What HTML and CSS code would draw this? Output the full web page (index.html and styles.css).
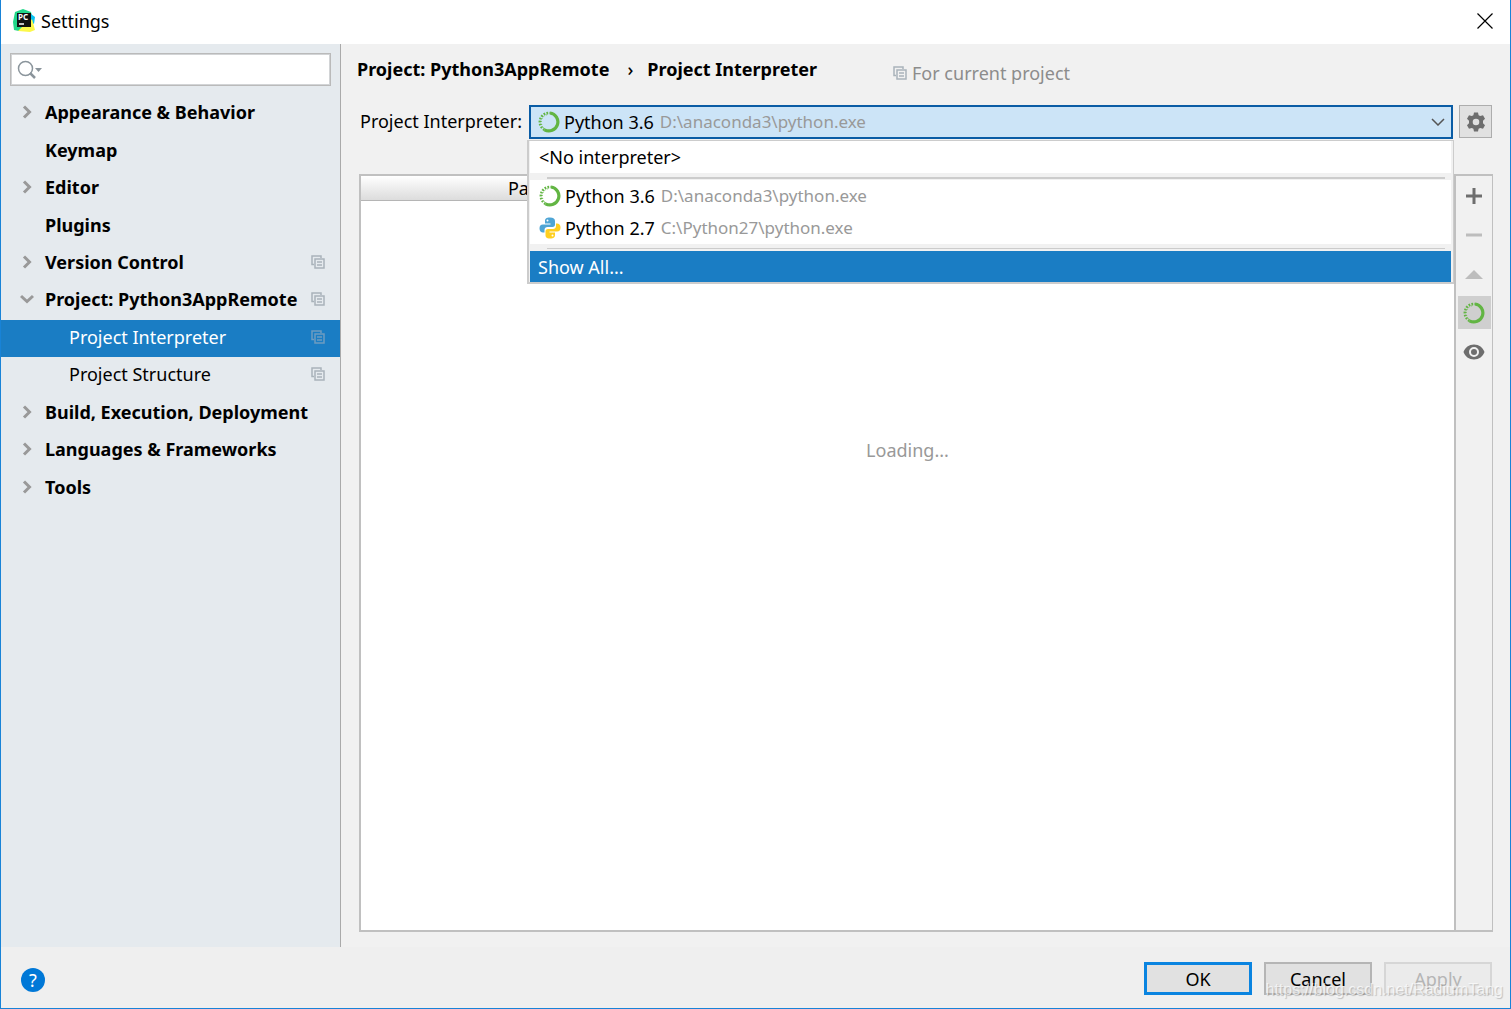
FILE: index.html
```html
<!DOCTYPE html>
<html lang="en">

<head>
    <meta charset="utf-8">
    <title>Settings</title>

    <link rel="stylesheet" href="styles.css">
</head>

<body>

    <!-- Shared icons -->
    <svg class="sprite" aria-hidden="true">
        <symbol id="copy" viewBox="0 0 14 14">
            <path d="M3 9.5H1V1h9v2M4 4h9v9H4zM6 7h5M6 10h5" fill="none" stroke="currentColor" stroke-width="1.500" />
        </symbol>
        <symbol id="right" viewBox="0 0 14 14">
            <path d="M4 1.500 9.500 7 4 12.500" fill="none" stroke="currentColor" stroke-width="3" />
        </symbol>
        <symbol id="down" viewBox="0 0 14 14">
            <path d="M1 4l6 5.500L13 4" fill="none" stroke="currentColor" stroke-width="3" />
        </symbol>
        <symbol id="conda" viewBox="0 0 22 22">
            <path d="M12 2a9 9 0 1 1-5.500 16.800" fill="none" stroke="#62b543" stroke-width="3.200" />
            <path d="M6.500 18.800A9 9 0 0 1 12 2" fill="none" stroke="#62b543" stroke-width="2.600" stroke-dasharray="1.700 1.300" />
            <path d="M5.500 16.500A7.600 7.600 0 0 1 11 3.500" fill="none" stroke="#62b543" stroke-width="1" stroke-dasharray="1 2" />
        </symbol>
        <symbol id="python" viewBox="0 0 22 22">
            <path d="M11 .5C7 .5 6 2 6 4v2.500h5.500v1H4C1.500 7.500.5 9 .5 11.500S2 15.500 4 15.500h1.500V13c0-2 1.300-3 3-3h5c1.700 0 2.500-1 2.500-2.500V4c0-2-1.500-3.500-5-3.500z" fill="#4fa5d5" />
            <path d="M11 21.500c4 0 5-1.500 5-3.500v-2.500h-5.500v-1H18c2.500 0 3.500-1.500 3.500-4S20 6.500 18 6.500h-1V9c0 2-1.300 3-3 3H9c-1.700 0-2.500 1-2.500 2.500V18c0 2 1 3.500 4.500 3.500z" fill="#ffcf1f" />
            <circle cx="8.500" cy="3.500" r="1" fill="#fff" />
            <circle cx="13.500" cy="18.500" r="1" fill="#fff" />
        </symbol>
    </svg>

    <header class="titlebar">
        <svg class="logo" viewBox="0 0 24 24" aria-hidden="true">
            <path d="M3 3 11 0l8 3 1 4-7 13-6 2-5-1-1-8z" fill="#21d789" />
            <path d="m19 5 4 3-1 7-6-4z" fill="#07c3f2" />
            <path d="m20 10 3 11-5 2-12-1 5-5 6-3z" fill="#fcf84a" />
            <path d="M5 4h14v14H5z" fill="#111" />
            <text x="6" y="11" class="logo-text">PC</text>
            <path d="M7 15h5" stroke="#fff" stroke-width="1.500" />
        </svg>
        <h1 class="title">Settings</h1>
        <button class="close" type="button" aria-label="Close">
            <svg viewBox="0 0 16 16"><path d="M.5.5l15 15M15.500.5l-15 15" stroke="#000" stroke-width="1.200" /></svg>
        </button>
    </header>

    <div class="content">
        <aside class="sidebar">
            <label class="search">
                <svg viewBox="0 0 26 20" aria-hidden="true">
                    <circle cx="8.500" cy="8.500" r="7" fill="none" stroke="#8b959c" stroke-width="1.500" />
                    <path d="m13 13 5 5" stroke="#8b959c" stroke-width="2.500" />
                    <path d="M18 8h7l-3.500 4z" fill="#8b959c" />
                </svg>
                <input type="text" aria-label="Search settings">
            </label>

            <nav>
                <ul class="tree">
                    <li><a href="#"><svg class="arrow"><use href="#right" /></svg>Appearance &amp; Behavior</a></li>
                    <li><a href="#"><span class="arrow"></span>Keymap</a></li>
                    <li><a href="#"><svg class="arrow"><use href="#right" /></svg>Editor</a></li>
                    <li><a href="#"><span class="arrow"></span>Plugins</a></li>
                    <li><a href="#"><svg class="arrow"><use href="#right" /></svg>Version Control<svg class="copy"><use href="#copy" /></svg></a></li>
                    <li><a href="#"><svg class="arrow"><use href="#down" /></svg>Project: Python3AppRemote<svg class="copy"><use href="#copy" /></svg></a></li>
                    <li><a href="#" class="child selected" aria-current="page">Project Interpreter<svg class="copy"><use href="#copy" /></svg></a></li>
                    <li><a href="#" class="child">Project Structure<svg class="copy"><use href="#copy" /></svg></a></li>
                    <li><a href="#"><svg class="arrow"><use href="#right" /></svg>Build, Execution, Deployment</a></li>
                    <li><a href="#"><svg class="arrow"><use href="#right" /></svg>Languages &amp; Frameworks</a></li>
                    <li><a href="#"><svg class="arrow"><use href="#right" /></svg>Tools</a></li>
                </ul>
            </nav>
        </aside>

        <main class="main">
            <div class="heading">
                <h2 class="crumbs">Project: Python3AppRemote<span class="crumb-arrow">›</span>Project Interpreter</h2>
                <p class="scope"><svg class="copy"><use href="#copy" /></svg>For current project</p>
            </div>

            <div class="field">
                <label for="interpreter">Project Interpreter:</label>
                <div class="combo">
                    <button class="combo-button" id="interpreter" type="button" aria-haspopup="listbox" aria-expanded="true">
                        <svg class="env"><use href="#conda" /></svg>Python 3.6 <span class="path">D:\anaconda3\python.exe</span>
                        <svg class="chevron" viewBox="0 0 14 8"><path d="m1 1 6 6 6-6" fill="none" stroke="#555" stroke-width="1.500" /></svg>
                    </button>
                    <ul class="popup" role="listbox" aria-label="Project Interpreter">
                        <li class="option" role="option">&lt;No interpreter&gt;</li>
                        <li class="separator thick" role="presentation"></li>
                        <li class="option" role="option"><svg class="env"><use href="#conda" /></svg>Python 3.6 <span class="path">D:\anaconda3\python.exe</span></li>
                        <li class="option" role="option"><svg class="env"><use href="#python" /></svg>Python 2.7 <span class="path">C:\Python27\python.exe</span></li>
                        <li class="separator" role="presentation"></li>
                        <li class="option active" role="option" aria-selected="true">Show All...</li>
                    </ul>
                </div>
                <button class="gear" type="button" aria-label="Interpreter settings">
                    <svg viewBox="0 0 20 20">
                        <path fill="#6e6e6e" fill-rule="evenodd" d="M8 .5h4l.6 2.700 1.600.9 2.800-.9 2 3.500-2 2v2.600l2 2-2 3.500-2.800-.9-1.600.9-.6 2.700H8l-.6-2.700-1.600-.9-2.800.9-2-3.500 2-2V8.700l-2-2 2-3.500 2.800.9 1.600-.9zM10 6.700a3.300 3.300 0 1 0 0 6.600 3.300 3.300 0 0 0 0-6.600z" />
                    </svg>
                </button>
            </div>

            <div class="packages">
                <div class="package-list">
                    <table>
                        <thead>
                            <tr>
                                <th>Package</th>
                                <th></th>
                                <th></th>
                            </tr>
                        </thead>
                    </table>
                    <p class="loading">Loading...</p>
                </div>
                <div class="tools">
                    <button type="button" aria-label="Install"><svg viewBox="0 0 22 22"><path d="M3 11h16M11 3v16" stroke="#6e6e6e" stroke-width="3" /></svg></button>
                    <button type="button" aria-label="Uninstall" disabled><svg viewBox="0 0 22 22"><path d="M3 11h16" stroke="#bdbdbd" stroke-width="3" /></svg></button>
                    <button type="button" aria-label="Upgrade" disabled><svg viewBox="0 0 22 22"><path d="M2 16h18l-9-9z" fill="#bdbdbd" /></svg></button>
                    <button type="button" aria-label="Use Conda" class="pressed"><svg><use href="#conda" /></svg></button>
                    <button type="button" aria-label="Show early releases">
                        <svg viewBox="0 0 22 22">
                            <path fill="#6e6e6e" fill-rule="evenodd" d="M11 3.500C6 3.500 2 6.500.5 11c1.500 4.500 5.500 7.500 10.500 7.500s9-3 10.500-7.500C20 6.500 16 3.500 11 3.500zm0 2.500a5 5 0 1 1 0 10 5 5 0 0 1 0-10z" />
                            <circle cx="11" cy="11" r="3" fill="#6e6e6e" />
                        </svg>
                    </button>
                </div>
            </div>
        </main>
    </div>

    <footer class="footer">
        <button class="help" type="button" aria-label="Help">?</button>
        <button class="btn primary" type="button">OK</button>
        <button class="btn" type="button">Cancel</button>
        <button class="btn" type="button" disabled>Apply</button>
        <span class="watermark">https://blog.csdn.net/RadiumTang</span>
    </footer>

</body>

</html>
```
FILE: styles.css
```css
* {
    box-sizing: border-box;
}

body {
    margin: 0;
    height: 100vh;
    display: flex;
    flex-direction: column;
    border: 1px solid #1883d7;
    border-top: 0;
    background: #f1f1f1;
    color: #000;
    font: 18px/24px "Noto Sans", "Open Sans", sans-serif;
}

h1,
h2,
p,
ul {
    margin: 0;
    padding: 0;
    font-size: inherit;
    list-style: none;
}

button,
input {
    font: inherit;
    color: inherit;
    padding: 0;
    margin: 0;
}

svg {
    display: block;
    flex: none;
}

.sprite {
    position: absolute;
    width: 0;
    height: 0;
}

/* Title bar */
.titlebar {
    display: flex;
    align-items: center;
    height: 44px;
    padding: 0 17px 2px 11px;
    background: #fff;
}

.logo {
    width: 24px;
    height: 24px;
    margin-right: 5px;
}

.logo-text {
    fill: #fff;
    font-size: 8px;
    font-weight: bold;
}

.title {
    flex: 1;
    font-weight: normal;
}

.close {
    border: 0;
    background: none;
}

.close svg {
    width: 16px;
    height: 16px;
}

.content {
    flex: 1;
    display: flex;
    min-height: 0;
}

/* Sidebar */
.sidebar {
    width: 340px;
    flex: none;
    padding-top: 9px;
    background: #e5eaee;
    border-right: 1px solid #aaa;
}

.search {
    display: flex;
    align-items: center;
    height: 33px;
    margin: 0 9px 9px;
    padding-left: 6px;
    background: #fff;
    border: 1px solid #bababa;
    outline: 1px solid #d2d4d6;
    outline-offset: -2px;
}

.search svg {
    width: 26px;
    height: 20px;
}

.search input {
    flex: 1;
    min-width: 0;
    border: 0;
    outline: 0;
    background: none;
}

.tree {
    display: grid;
    grid-template-rows: repeat(11, 1fr);
    height: 412px;
}

.tree a {
    display: flex;
    align-items: center;
    height: 100%;
    padding: 0 15px 3px 19px;
    color: #000;
    font-size: 18px;
    font-weight: bold;
    text-decoration: none;
    white-space: nowrap;
}

.tree .child {
    padding-left: 68px;
    font-weight: normal;
}

.tree .selected {
    background: #1a7dc4;
    color: #fff;
}

.arrow {
    width: 14px;
    height: 14px;
    margin-right: 11px;
    color: #999;
}

.copy {
    width: 14px;
    height: 14px;
    color: #a9b3ba;
}

.tree .copy {
    margin-left: auto;
}

.selected .copy {
    color: #6e9cc0;
}

/* Interpreter page */
.main {
    flex: 1;
    min-width: 0;
    display: flex;
    flex-direction: column;
    padding: 13px 17px 15px 18px;
}

.heading {
    display: flex;
    align-items: flex-start;
    height: 48px;
    margin-left: -2px;
}

.crumbs {
    white-space: nowrap;
}

.crumb-arrow {
    margin: 0 14px 0 18px;
    font-weight: 500;
}

.scope {
    display: flex;
    align-items: center;
    gap: 5px;
    margin: 4px 0 0 76px;
    color: #8c8c8c;
}

.field {
    display: flex;
    align-items: flex-start;
    height: 69px;
    padding: 0 1px;
}

.field label {
    width: 169px;
    padding-top: 4px;
    white-space: nowrap;
}

.combo {
    position: relative;
    flex: 1;
    margin-right: 6px;
}

.combo-button {
    display: flex;
    align-items: center;
    width: 100%;
    height: 34px;
    padding: 0 6px 0 7px;
    border: 2px solid #0a5ca5;
    background: #cce4f7;
    white-space: nowrap;
}

.env {
    width: 22px;
    height: 22px;
    margin-right: 4px;
}

.path {
    margin-left: 6px;
    color: #999;
    font-size: 17px;
}

.chevron {
    width: 14px;
    height: 8px;
    margin-left: auto;
}

.popup {
    position: absolute;
    top: 35px;
    left: -2px;
    right: -1px;
    padding: 0 2px 0 1px;
    background: #f1f1f1;
    border: 2px solid #ccc;
    border-width: 1px 1px 2px 2px;
}

.option {
    display: flex;
    align-items: center;
    height: 32px;
    padding-left: 9px;
    background: #fff;
}

.option.active {
    height: 31px;
    padding-left: 8px;
    background: #1a7dc4;
    color: #fff;
}

.separator {
    height: 5px;
    margin: 0 6px 2px 17px;
    border-bottom: 1px solid #ccc;
}

.separator.thick {
    height: 6px;
    margin-bottom: 1px;
    border-bottom-width: 2px;
}

.gear {
    display: grid;
    place-items: center;
    width: 33px;
    height: 33px;
    border: 1px solid #adadad;
    background: #e1e1e1;
}

.gear svg {
    width: 20px;
    height: 20px;
}

.packages {
    flex: 1;
    display: flex;
    border: 2px solid #c0c0c0;
    border-right-width: 1px;
}

.package-list {
    flex: 1;
    background: #fff;
}

.package-list table {
    width: 100%;
    table-layout: fixed;
    border-collapse: collapse;
}

.package-list th {
    height: 24px;
    padding: 0;
    background: linear-gradient(#fff, #dcdcdc);
    border-bottom: 1px solid #b5b5b5;
    font-weight: normal;
    line-height: 24px;
}

.loading {
    padding-top: 237px;
    color: #999;
    text-align: center;
}

.tools {
    display: flex;
    flex-direction: column;
    align-items: center;
    gap: 6px;
    width: 38px;
    padding-top: 3px;
    border-left: 2px solid #c0c0c0;
}

.tools button {
    display: grid;
    place-items: center;
    width: 33px;
    height: 33px;
    border: 0;
    background: none;
}

.tools .pressed {
    background: #cfcfcf;
}

.tools svg {
    width: 22px;
    height: 22px;
}

/* Dialog buttons */
.footer {
    position: relative;
    display: flex;
    align-items: center;
    gap: 12px;
    height: 61px;
    padding: 2px 18px 0 20px;
    background: #efefef;
}

.help {
    width: 24px;
    height: 24px;
    margin: 2px auto 0 0;
    border: 0;
    border-radius: 50%;
    background: #0078d7;
    color: #fff;
    line-height: 24px;
}

.btn {
    width: 108px;
    height: 33px;
    border: 2px solid #b5b5b5;
    background: #e1e1e1;
}

.btn.primary {
    border: 3px solid #0a84e0;
}

.btn:disabled {
    border-color: #d6d6d6;
    background: #ebebeb;
    color: #b5b5b5;
}

.watermark {
    position: absolute;
    right: 7px;
    bottom: 6px;
    color: rgba(255, 255, 255, 0.7);
    font: 16px/24px "Liberation Sans", Arial, sans-serif;
    text-shadow: 1px 1px 1px rgba(0, 0, 0, 0.2);
}
```
